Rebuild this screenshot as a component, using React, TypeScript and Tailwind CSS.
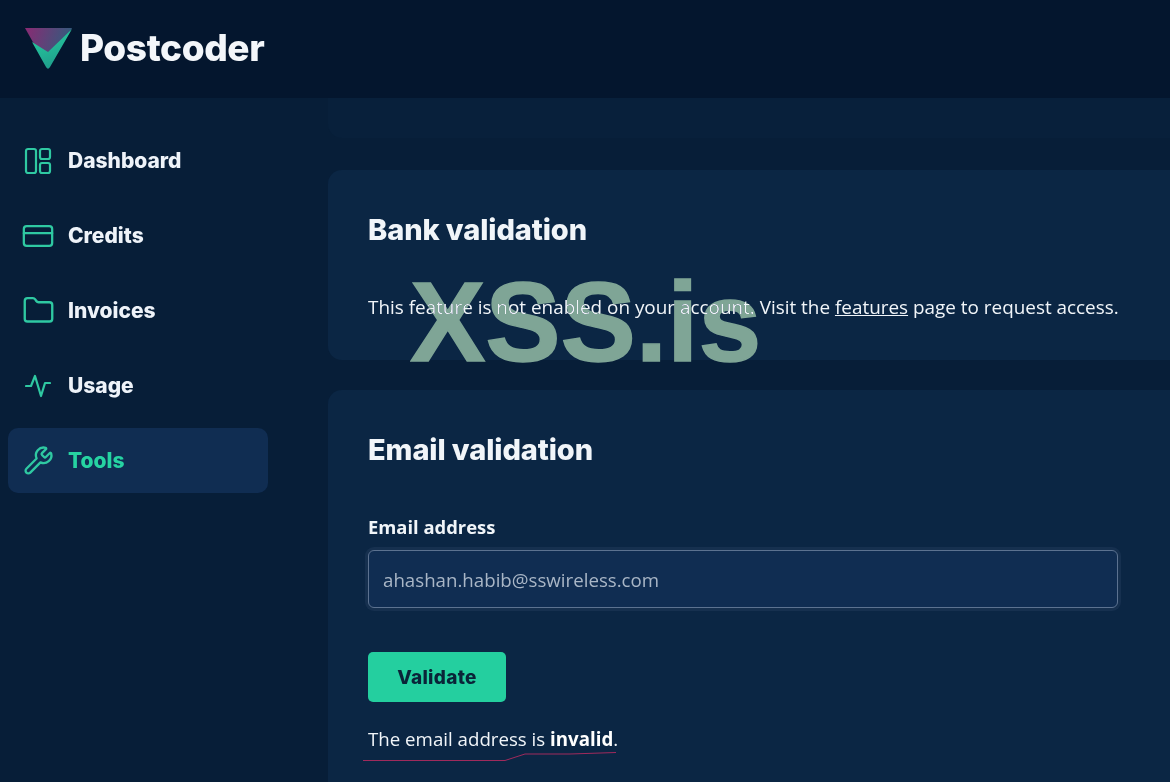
import React from 'react';
import { CreditCard, Folder, Wrench } from 'lucide-react';

const heading = "font-['Inter','Lato',sans-serif]";
const body = "font-['Open_Sans','Noto_Sans',sans-serif]";

const Logo = () => (
  <svg width="50" height="42" viewBox="0 0 50 42" className="mt-[2px] shrink-0">
    <defs>
      <linearGradient id="lg-top" x1="0" y1="0" x2="1" y2="0.3">
        <stop offset="0" stopColor="#8a2a73" />
        <stop offset="1" stopColor="#2f5d7e" />
      </linearGradient>
      <linearGradient id="lg-v" x1="0" y1="0" x2="0.4" y2="1">
        <stop offset="0" stopColor="#27d3a2" />
        <stop offset="1" stopColor="#1f9f8c" />
      </linearGradient>
    </defs>
    <path d="M1 0 L48 0 L24 41 Z" fill="url(#lg-top)" />
    <path d="M8 14 L24 24 L48 1 L26 39 Q24 42 22 39 Z" fill="url(#lg-v)" />
  </svg>
);

const DashIcon = () => (
  <svg width="28" height="28" viewBox="0 0 28 28" fill="none" stroke="currentColor" strokeWidth="2.2">
    <rect x="2" y="2" width="10" height="24" rx="2" />
    <rect x="16" y="2" width="10" height="10" rx="2" />
    <rect x="16" y="16" width="10" height="10" rx="2" />
  </svg>
);

const UsageIcon = () => (
  <svg width="26" height="24" viewBox="0 0 26 24" fill="none" stroke="currentColor" strokeWidth="2.2" strokeLinecap="round" strokeLinejoin="round">
    <polyline points="1 12 6 12 10 2 16 22 20 9 25 9" />
  </svg>
);

const NAV = [
  { label: 'Dashboard', icon: <DashIcon /> },
  { label: 'Credits', icon: <CreditCard size={34} strokeWidth={1.6} /> },
  { label: 'Invoices', icon: <Folder size={33} strokeWidth={1.7} /> },
  { label: 'Usage', icon: <UsageIcon /> },
  { label: 'Tools', icon: <Wrench size={31} strokeWidth={1.8} />, active: true },
];

export default function App() {
  return (
    <div className={`relative h-[782px] overflow-hidden bg-[#071e38] text-[#f1f5f9] ${body}`}>
      <header className="flex h-[98px] items-center gap-[6px] bg-[#04162e] pl-[24px] pb-[3px]">
        <Logo />
        <span className={`text-[37px] font-extrabold tracking-[-0.4px] text-[#f3f6fa] ${heading}`}>Postcoder</span>
      </header>

      <div className="flex">
        <aside className="flex w-[328px] shrink-0 flex-col gap-[10px] pl-[8px] pt-[30px]">
          {NAV.map((n) => (
            <div
              key={n.label}
              className={`flex h-[65px] w-[260px] items-center rounded-[10px] ${n.active ? 'bg-[#102d52]' : ''}`}
            >
              <span className="flex w-[60px] justify-center text-[#2fc9a2]">{n.icon}</span>
              <span className={`text-[21px] font-extrabold ${heading} ${n.active ? 'text-[#26d3a2]' : 'text-[#eef3f9]'}`}>
                {n.label}
              </span>
            </div>
          ))}
        </aside>

        <main className="min-w-0 flex-1">
          <div className="h-[40px] rounded-bl-[14px] bg-[#08203b]" />
          <section className="mt-[32px] h-[190px] rounded-l-[14px] bg-[#0b2644] pl-[40px] pt-[38px]">
            <h2 className={`text-[29px] font-extrabold leading-[44px] tracking-[-0.1px] ${heading}`}>Bank validation</h2>
            <p className="mt-[41px] whitespace-nowrap text-[18.9px] leading-[28px]">
              This feature is not enabled on your account. Visit the <a className="underline">features</a> page to request access.
            </p>
          </section>
          <section className="mt-[30px] h-[420px] rounded-l-[14px] bg-[#0b2644] pl-[40px] pt-[38px]">
            <h2 className={`text-[29px] font-extrabold leading-[44px] tracking-[-0.1px] ${heading}`}>Email validation</h2>
            <label className="mt-[42px] block text-[18.4px] font-bold leading-[26px]">Email address</label>
            <div className="mt-[10px] w-[750px] rounded-[6px] border border-[#5c7290] bg-[#102d52] px-[14px] pb-[13px] pt-[15px] text-[18.7px] leading-[28px] text-[#a9b6c6] shadow-[0_0_0_3px_#16304f]">
              ahashan.habib@sswireless.com
            </div>
            <button className={`mt-[44px] block h-[50px] w-[138px] rounded-[5px] bg-[#24cf9f] pt-[2px] text-[19px] font-extrabold tracking-[0.3px] text-[#0a2438] ${heading}`}>
              Validate
            </button>
            <p className="mt-[23px] text-[18.7px] leading-[28px]">
              The email address is <b className="font-bold text-white">invalid</b>.
            </p>
          </section>
        </main>
      </div>

      {/* scribble under the result line */}
      <svg className="absolute left-[360px] top-[750px]" width="260" height="14" fill="none">
        <path d="M3 10.5 L145 10.5 L165 4 L210 4 L256 2.5" stroke="#a02a5c" strokeWidth="1" />
      </svg>

      {/* watermark */}
      <span className="pointer-events-none absolute left-[410px] top-[257px] font-['Liberation_Sans',sans-serif] text-[113px] font-bold leading-[130px] tracking-[-0.1px] text-[#7fa596] mix-blend-lighten [-webkit-text-stroke:1.5px_#7fa596]">
        XSS.is
      </span>
    </div>
  );
}
